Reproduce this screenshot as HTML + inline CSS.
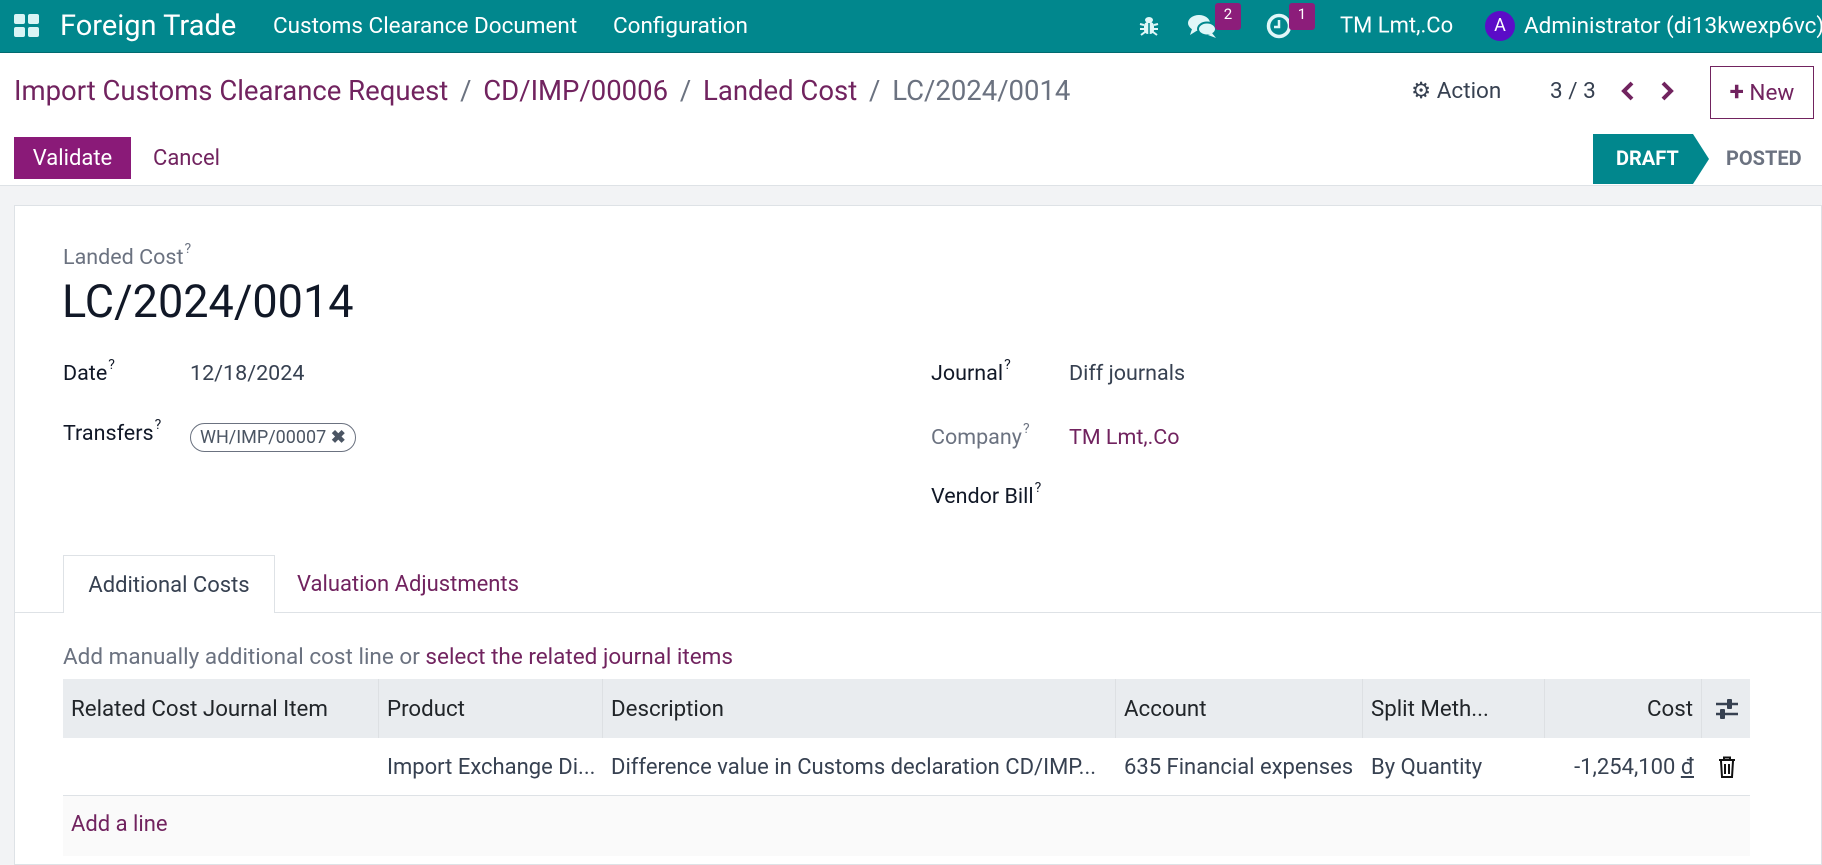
<!DOCTYPE html>
<html><head><meta charset="utf-8"><style>
*{box-sizing:border-box;margin:0;padding:0}
body{width:1822px;height:852px;overflow:hidden;font-family:"Roboto","Liberation Sans",sans-serif;font-size:21.5px;color:#374151;background:#f2f3f5;position:relative}
.abs{position:absolute;white-space:nowrap}
.nav{position:absolute;left:0;top:0;width:1822px;height:53px;background:#01878d;color:#fff;border-bottom:1px solid #016a6f}
.nav .abs{top:50%;transform:translateY(-50%)}
.purple{color:#71235f}
.cp{position:absolute;left:0;top:53px;width:1822px;height:133px;background:#fff;border-bottom:1px solid #dee2e6}
.sheet{position:absolute;left:14px;top:205px;width:1808px;height:660px;background:#fff;border:1px solid #dee2e6}
sup{font-size:14px;vertical-align:top;position:relative;top:-4px;margin-left:1px}
.th{position:absolute;top:679px;height:59px;background:#e9ecef;line-height:61px;padding-left:8px;font-size:22.3px;color:#212529;border-right:1px solid #dde0e3}
.td{position:absolute;top:738px;height:57px;line-height:59px;padding-left:8px;font-size:22px;color:#374151;overflow:hidden}
.badge{position:absolute;background:#8c1d7a;color:#fff;font-size:15px;width:26px;height:27px;border-radius:3px;text-align:center;line-height:23px}
.sl{color:#6b7280;margin:0 5px}
</style></head><body>
<div class="nav">
  <div class="abs" style="left:14px;width:26px;height:24px">
    <div style="position:absolute;left:0;top:0;width:11px;height:10px;background:#d9f4f5;border-radius:2px"></div>
    <div style="position:absolute;left:14px;top:0;width:11px;height:10px;background:#d9f4f5;border-radius:2px"></div>
    <div style="position:absolute;left:0;top:13px;width:11px;height:10px;background:#d9f4f5;border-radius:2px"></div>
    <div style="position:absolute;left:14px;top:13px;width:11px;height:10px;background:#d9f4f5;border-radius:2px"></div>
  </div>
  <div class="abs" style="left:60px;font-size:29px">Foreign Trade</div>
  <div class="abs" style="left:273px;font-size:22.5px">Customs Clearance Document</div>
  <div class="abs" style="left:613px;font-size:22.5px">Configuration</div>
  <svg class="abs" style="left:1139px" width="20" height="22" viewBox="0 0 20 22"><g fill="#e0f7f8"><ellipse cx="10" cy="5" rx="4" ry="3"/><rect x="5" y="7" width="10" height="12" rx="4"/></g><g stroke="#e0f7f8" stroke-width="2"><line x1="1" y1="9" x2="5" y2="10"/><line x1="19" y1="9" x2="15" y2="10"/><line x1="1" y1="14" x2="5" y2="14"/><line x1="19" y1="14" x2="15" y2="14"/><line x1="2" y1="20" x2="6" y2="17"/><line x1="18" y1="20" x2="14" y2="17"/></g><line x1="10" y1="8" x2="10" y2="19" stroke="#01878d" stroke-width="1.5"/></svg>
  <svg class="abs" style="left:1188px" width="30" height="26" viewBox="0 0 30 26"><ellipse cx="11" cy="10" rx="11" ry="8" fill="#e0f7f8"/><path d="M4 16 L2 22 L10 17Z" fill="#e0f7f8"/><ellipse cx="19" cy="16" rx="9" ry="6.5" fill="#e0f7f8" stroke="#01878d" stroke-width="2"/><path d="M24 20 L28 25 L20 22Z" fill="#e0f7f8"/></svg>
  <div class="badge" style="left:1215px;top:3px;transform:none">2</div>
  <svg class="abs" style="left:1266px" width="26" height="26" viewBox="0 0 26 26"><circle cx="13" cy="13" r="10.5" fill="none" stroke="#e0f7f8" stroke-width="3.5"/><path d="M13 7 V14 H8" fill="none" stroke="#e0f7f8" stroke-width="2.5"/></svg>
  <div class="badge" style="left:1289px;top:3px;transform:none">1</div>
  <div class="abs" style="left:1340px;font-size:22px">TM Lmt,.Co</div>
  <div class="abs" style="left:1485px;width:30px;height:30px;border-radius:50%;background:#5b0cc7;text-align:center;line-height:30px;font-size:18px">A</div>
  <div class="abs" style="left:1524px;font-size:22.5px">Administrator (di13kwexp6vc)</div>
</div>
<div class="cp">
  <div class="abs purple" style="left:14px;top:21px;font-size:27.5px">Import Customs Clearance Request<span class="sl"> / </span>CD/IMP/00006<span class="sl"> / </span>Landed Cost<span class="sl"> / </span><span style="color:#6b7280">LC/2024/0014</span></div>
  <div class="abs" style="left:1411px;top:25px;font-size:22.5px;color:#374151">⚙ Action</div>
  <div class="abs" style="left:1550px;top:25px;font-size:22.5px">3 / 3</div>
  <svg class="abs" style="left:1620px;top:27px" width="16" height="22" viewBox="0 0 16 22"><path d="M12 3 L4 11 L12 19" fill="none" stroke="#71235f" stroke-width="4"/></svg>
  <svg class="abs" style="left:1659px;top:27px" width="16" height="22" viewBox="0 0 16 22"><path d="M4 3 L12 11 L4 19" fill="none" stroke="#71235f" stroke-width="4"/></svg>
  <div class="abs purple" style="left:1710px;top:13px;width:104px;height:53px;border:1px solid #71235f;line-height:51px;text-align:center;font-size:22.5px"><b style="font-size:26px">+</b> New</div>
  <div class="abs" style="left:14px;top:84px;width:117px;height:42px;background:#8a1a78;color:#fff;text-align:center;line-height:44px;font-size:22px">Validate</div>
  <div class="abs purple" style="left:153px;top:93px;font-size:22px">Cancel</div>
  <svg class="abs" style="left:1593px;top:81px" width="229" height="50"><polygon points="0,0 100,0 100,0 116,25 100,50 0,50" fill="#01878d"/></svg>
  <div class="abs" style="left:1616px;top:93px;font-size:20px;color:#fff;font-weight:bold">DRAFT</div>
  <div class="abs" style="left:1726px;top:93px;font-size:20px;color:#6b7280;font-weight:bold">POSTED</div>
</div>
<div class="sheet"></div>
<div class="abs" style="left:63px;top:245px;font-size:21.5px;color:#6b7280">Landed Cost<sup>?</sup></div>
<div class="abs" style="left:62px;top:275px;font-size:45px;color:#111827">LC/2024/0014</div>
<div class="abs" style="left:63px;top:361px;color:#111827">Date<sup>?</sup></div>
<div class="abs" style="left:190px;top:361px">12/18/2024</div>
<div class="abs" style="left:63px;top:421px;color:#111827">Transfers<sup>?</sup></div>
<div class="abs" style="left:190px;top:423px;height:29px;border:1px solid #6b7280;border-radius:15px;padding:0 9px;line-height:28px;font-size:18px;color:#4b5563">WH/IMP/00007 <b>✖</b></div>
<div class="abs" style="left:931px;top:361px;color:#111827">Journal<sup>?</sup></div>
<div class="abs" style="left:1069px;top:361px">Diff journals</div>
<div class="abs" style="left:931px;top:425px;color:#6b7280">Company<sup>?</sup></div>
<div class="abs purple" style="left:1069px;top:425px">TM Lmt,.Co</div>
<div class="abs" style="left:931px;top:484px;color:#111827">Vendor Bill<sup>?</sup></div>
<div class="abs" style="left:14px;top:612px;width:1808px;height:1px;background:#dee2e6"></div>
<div class="abs" style="left:63px;top:555px;width:212px;height:58px;background:#fff;border:1px solid #dee2e6;border-bottom:none;text-align:center;line-height:60px;color:#374151;font-size:22px">Additional Costs</div>
<div class="abs purple" style="left:297px;top:572px;font-size:22px">Valuation Adjustments</div>
<div class="abs" style="left:63px;top:644px;color:#6b7280;font-size:22.5px">Add manually additional cost line or <span class="purple">select the related journal items</span></div>
<div class="th" style="left:63px;width:316px">Related Cost Journal Item</div>
<div class="th" style="left:379px;width:224px">Product</div>
<div class="th" style="left:603px;width:513px">Description</div>
<div class="th" style="left:1116px;width:247px">Account</div>
<div class="th" style="left:1363px;width:182px">Split Meth...</div>
<div class="th" style="left:1545px;width:157px;text-align:right;padding-right:8px">Cost</div>
<div class="th" style="left:1702px;width:48px;padding:0;border:none"><svg style="position:absolute;left:13px;top:19px" width="24" height="22" viewBox="0 0 24 22"><g stroke="#374151" stroke-width="2.5"><line x1="1" y1="6" x2="23" y2="6"/><line x1="1" y1="16" x2="23" y2="16"/></g><rect x="12" y="1" width="5" height="10" rx="1" fill="#374151"/><rect x="5" y="11" width="5" height="10" rx="1" fill="#374151"/></svg></div>
<div class="td" style="left:379px;width:224px">Import Exchange Di...</div>
<div class="td" style="left:603px;width:513px">Difference value in Customs declaration CD/IMP...</div>
<div class="td" style="left:1116px;width:247px">635 Financial expenses</div>
<div class="td" style="left:1363px;width:182px">By Quantity</div>
<div class="td" style="left:1545px;width:157px;text-align:right;padding-right:8px">-1,254,100 <u>đ</u></div>
<div class="td" style="left:1702px;width:48px;padding:0"><svg style="position:absolute;left:16px;top:18px" width="18" height="22" viewBox="0 0 18 22"><g fill="none" stroke="#111" stroke-width="2"><line x1="1" y1="4" x2="17" y2="4"/><path d="M6 4 V1.5 H12 V4"/><path d="M3 5 L4 21 H14 L15 5"/><line x1="7" y1="8" x2="7" y2="18"/><line x1="11" y1="8" x2="11" y2="18"/></g></svg></div>
<div class="abs" style="left:63px;top:795px;width:1687px;height:1px;background:#dee2e6"></div>
<div class="abs" style="left:63px;top:796px;width:1687px;height:60px;background:#fafafa"></div>
<div class="abs purple" style="left:71px;top:812px;font-size:22px">Add a line</div>
</body></html>
